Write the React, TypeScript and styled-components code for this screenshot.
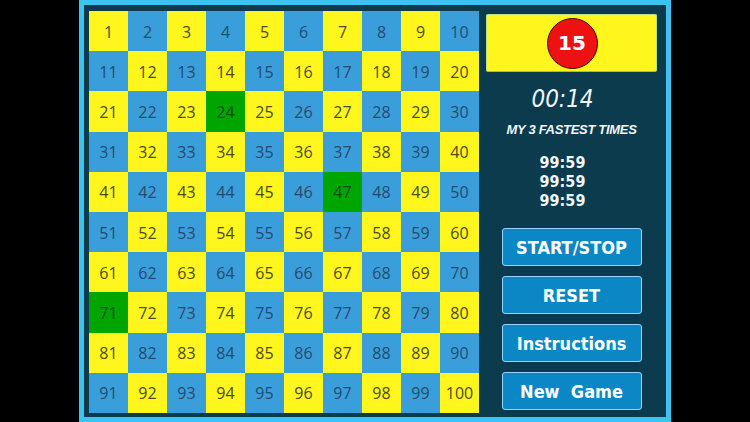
import React from "react";
import styled, { createGlobalStyle } from "styled-components";

const Global = createGlobalStyle`
  html, body { margin: 0; padding: 0; background: #000; }
  body { font-family: "DejaVu Sans", sans-serif; }
`;

const Screen = styled.div`
  width: 750px;
  height: 422px;
  background: #000;
  display: flex;
  justify-content: center;
  overflow: hidden;
`;

const Frame = styled.div`
  width: 592px;
  height: 422px;
  box-sizing: border-box;
  padding: 5px;
  background: #3cc4ef;
  display: flex;
`;

const Panel = styled.div`
  flex: 1;
  background: #0b3b4d;
  display: flex;
  padding: 6px 9px 4px 5px;
  gap: 7px;
`;

const Board = styled.div`
  width: 390px;
  height: 402px;
  display: grid;
  grid-template-columns: repeat(10, 1fr);
  grid-template-rows: repeat(10, 1fr);
`;

type Tone = "yellow" | "blue" | "green";
const toneBg: Record<Tone, string> = {
  yellow: "#fff61e",
  blue: "#3a9edb",
  green: "#00a500",
};
const toneFg: Record<Tone, string> = {
  yellow: "#4c4a1e",
  blue: "#244b6c",
  green: "#0f4a12",
};

const Cell = styled.div<{ $tone: Tone }>`
  background: ${(p) => toneBg[p.$tone]};
  color: ${(p) => toneFg[p.$tone]};
  display: flex;
  align-items: center;
  justify-content: center;
  font-family: "Open Sans", sans-serif;
  font-size: 16px;
  padding-top: 1px;
`;

const Side = styled.div`
  flex: 1;
  display: flex;
  flex-direction: column;
  align-items: center;
  padding-top: 3px;
`;

const ScoreBox = styled.div`
  align-self: stretch;
  height: 58px;
  box-sizing: border-box;
  background: #fff61e;
  border: 1px solid #b9e07a;
  border-bottom-color: #5fc6d8;
  border-radius: 2px;
  display: flex;
  align-items: center;
  justify-content: center;
`;

const Badge = styled.div`
  width: 51px;
  height: 51px;
  box-sizing: border-box;
  border-radius: 50%;
  background: #ee1111;
  border: 1.5px solid #3d0a05;
  color: #fff;
  display: flex;
  align-items: center;
  justify-content: center;
  font-family: "DejaVu Sans", sans-serif;
  font-weight: bold;
  font-size: 20px;
  margin-left: 1px;
`;

const Timer = styled.div`
  margin-top: 14px;
  margin-right: 18px;
  font-family: "DejaVu Sans Condensed", "DejaVu Sans", sans-serif;
  font-style: oblique;
  font-size: 24px;
  line-height: 26px;
  color: #f2f6f8;
`;

const Label = styled.div`
  margin-top: 11px;
  font-family: "Liberation Sans", Arial, sans-serif;
  font-weight: bold;
  font-style: italic;
  font-size: 13px;
  line-height: 14px;
  color: #f2f6f8;
  letter-spacing: -0.3px;
`;

const Times = styled.div`
  margin-top: 17px;
  margin-right: 18px;
  display: flex;
  flex-direction: column;
  align-items: center;
`;

const TimeLine = styled.div`
  font-family: "DejaVu Sans Condensed", "DejaVu Sans", sans-serif;
  font-weight: bold;
  font-size: 16px;
  line-height: 18.8px;
  color: #f2f6f8;
`;

const Buttons = styled.div`
  margin-top: 18px;
  display: flex;
  flex-direction: column;
  gap: 10px;
`;

const Button = styled.button`
  width: 140px;
  height: 38px;
  box-sizing: border-box;
  background: #0b87c5;
  border: 1.5px solid #9ad6f1;
  border-radius: 3px;
  color: #ffffff;
  font-family: "DejaVu Sans Condensed", "DejaVu Sans", sans-serif;
  font-weight: bold;
  font-size: 18px;
  white-space: pre;
  padding: 0;
  display: flex;
  align-items: center;
  justify-content: center;
  cursor: pointer;
`;

const greens = new Set([24, 47, 71]);
const fastest = ["99:59", "99:59", "99:59"];

export default function App() {
  const cells = Array.from({ length: 100 }, (_, i) => {
    const n = i + 1;
    const r = Math.floor(i / 10);
    const c = i % 10;
    const tone: Tone = greens.has(n) ? "green" : (r + c) % 2 === 0 ? "yellow" : "blue";
    return (
      <Cell key={n} $tone={tone}>
        {n}
      </Cell>
    );
  });

  return (
    <>
      <Global />
      <Screen>
        <Frame>
          <Panel>
            <Board>{cells}</Board>
            <Side>
              <ScoreBox>
                <Badge>15</Badge>
              </ScoreBox>
              <Timer>00:14</Timer>
              <Label>MY 3 FASTEST TIMES</Label>
              <Times>
                {fastest.map((t, i) => (
                  <TimeLine key={i}>{t}</TimeLine>
                ))}
              </Times>
              <Buttons>
                <Button>START/STOP</Button>
                <Button>RESET</Button>
                <Button>Instructions</Button>
                <Button>{"New  Game"}</Button>
              </Buttons>
            </Side>
          </Panel>
        </Frame>
      </Screen>
    </>
  );
}
